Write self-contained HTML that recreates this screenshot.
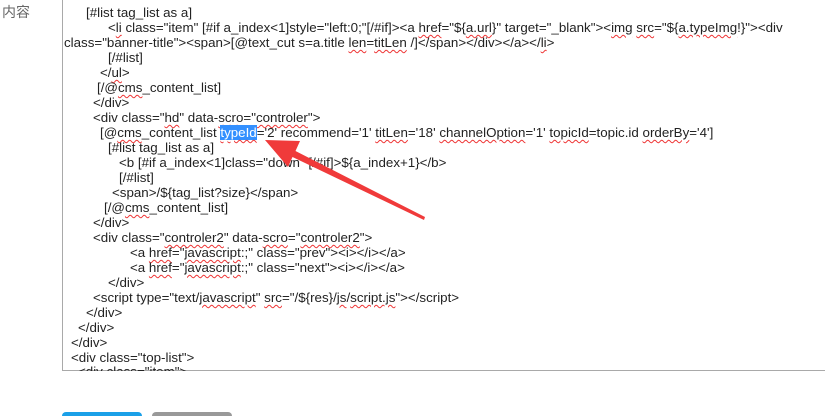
<!DOCTYPE html>
<html><head><meta charset="utf-8"><style>
html,body{margin:0;padding:0;background:#fff;width:825px;height:416px;overflow:hidden;position:relative}
.lbl{position:absolute;left:2px;top:2px;font:14px "Liberation Sans","Noto Sans CJK SC",sans-serif;color:#666}
.box{position:absolute;left:62px;top:-2px;width:800px;height:372px;border-left:1px solid #a9a9a9;border-bottom:1px solid #a9a9a9;overflow:hidden}
.l{position:absolute;white-space:pre;font:13.35px "Liberation Sans",Arial,sans-serif;color:#222;line-height:15px}
.w{text-decoration:underline wavy #e33;text-decoration-thickness:1px;text-underline-offset:2px}
.hl{background:#3390ff;color:#fff}
.btn{position:absolute;top:412px;width:80px;height:12px;border-radius:4px}
</style></head><body>
<div class="lbl">内容</div>
<div class="box"></div>
<div class="l" style="left:86px;top:5px">[#list tag_list as a]</div>
<div class="l" style="left:108px;top:20px">&lt;<span class="w">li</span> class="item" [#if a_index&lt;1]style="left:0;"[/#if]&gt;&lt;a <span class="w">href</span>="${<span class="w">a.url</span>}" target="_blank"&gt;&lt;<span class="w">img</span> <span class="w">src</span>="${<span class="w">a.typeImg</span>!}"&gt;&lt;div</div>
<div class="l" style="left:64px;top:35px">class="banner-title"&gt;&lt;span&gt;[@text_cut s=a.title <span class="w">len</span>=<span class="w">titLen</span> /]&lt;/span&gt;&lt;/div&gt;&lt;/a&gt;&lt;/<span class="w">li</span>&gt;</div>
<div class="l" style="left:108px;top:50px">[/#list]</div>
<div class="l" style="left:100px;top:65px">&lt;/<span class="w">ul</span>&gt;</div>
<div class="l" style="left:97px;top:80px">[/@<span class="w">cms</span>_content_list]</div>
<div class="l" style="left:93px;top:95px">&lt;/div&gt;</div>
<div class="l" style="left:93px;top:110px">&lt;div class="<span class="w">hd</span>" data-<span class="w">scro</span>="<span class="w">controler</span>"&gt;</div>
<div class="l" style="left:100px;top:125px">[@<span class="w">cms</span>_content_list <span class="hl w">typeId</span>='2' recommend='1' <span class="w">titLen</span>='18' <span class="w">channelOption</span>='1' <span class="w">topicId</span>=topic.id <span class="w">orderBy</span>='4']</div>
<div class="l" style="left:108px;top:140px">[#list tag_list as a]</div>
<div class="l" style="left:119px;top:155px">&lt;b [#if a_index&lt;1]class="down" [/#if]&gt;${a_index+1}&lt;/b&gt;</div>
<div class="l" style="left:119px;top:170px">[/#list]</div>
<div class="l" style="left:112px;top:185px">&lt;span&gt;/${tag_list?size}&lt;/span&gt;</div>
<div class="l" style="left:104px;top:200px">[/@<span class="w">cms</span>_content_list]</div>
<div class="l" style="left:93px;top:215px">&lt;/div&gt;</div>
<div class="l" style="left:93px;top:230px">&lt;div class="<span class="w">controler2</span>" data-<span class="w">scro</span>="<span class="w">controler2</span>"&gt;</div>
<div class="l" style="left:130px;top:245px">&lt;a <span class="w">href</span>="<span class="w">javascript</span>:;" class="prev"&gt;&lt;i&gt;&lt;/i&gt;&lt;/a&gt;</div>
<div class="l" style="left:130px;top:260px">&lt;a <span class="w">href</span>="<span class="w">javascript</span>:;" class="next"&gt;&lt;i&gt;&lt;/i&gt;&lt;/a&gt;</div>
<div class="l" style="left:108px;top:275px">&lt;/div&gt;</div>
<div class="l" style="left:93px;top:290px">&lt;script type="text/<span class="w">javascript</span>" <span class="w">src</span>="/${res}/<span class="w">js</span>/<span class="w">script.js</span>"&gt;&lt;/script&gt;</div>
<div class="l" style="left:86px;top:305px">&lt;/div&gt;</div>
<div class="l" style="left:78px;top:320px">&lt;/div&gt;</div>
<div class="l" style="left:71px;top:335px">&lt;/div&gt;</div>
<div class="l" style="left:71px;top:350px">&lt;div class="top-list"&gt;</div>
<div style="position:absolute;left:63px;top:364px;width:760px;height:7px;overflow:hidden"><div class="l" style="left:15px;top:0px">&lt;div class="item"&gt;</div></div>
<svg style="position:absolute;left:0;top:0" width="825" height="416"><polygon points="265,140 300,141 295.5,151 425,217 424,220 292.5,157 288,167" fill="#f03a3a"/></svg>
<div class="btn" style="left:62px;background:#1aa0e8"></div>
<div class="btn" style="left:152px;background:#999"></div>
</body></html>
